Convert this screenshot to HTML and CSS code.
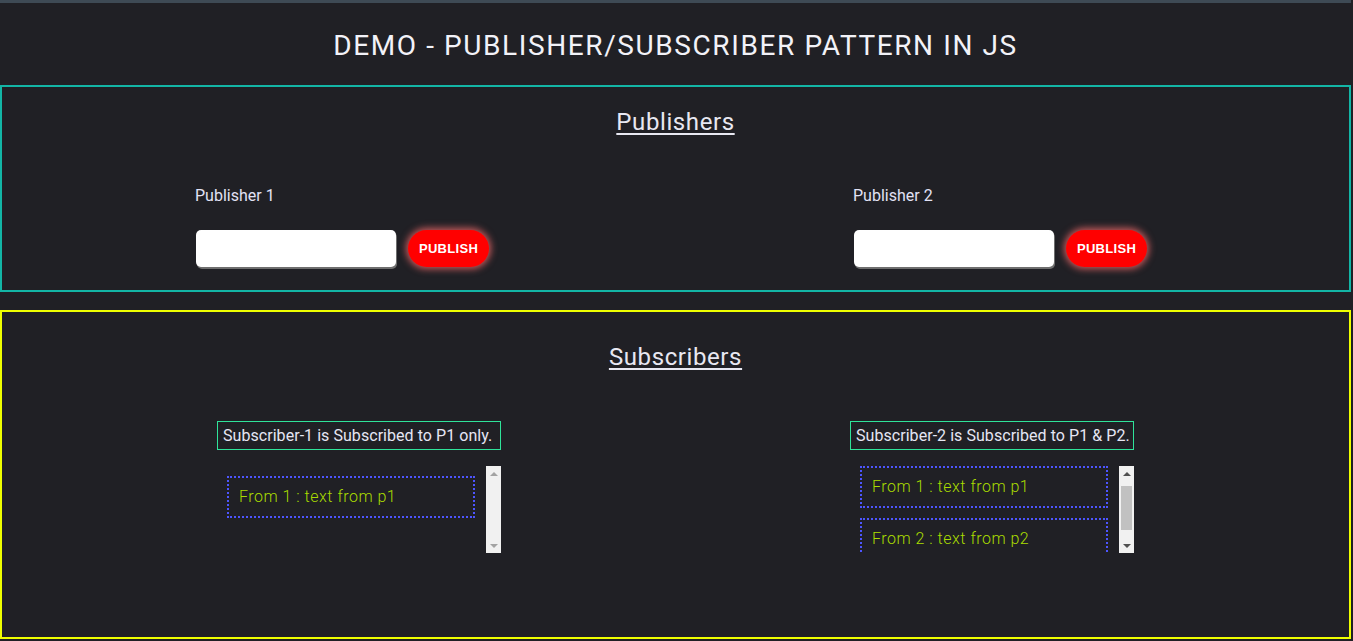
FILE: index.html
```
<!DOCTYPE html>
<html>
<head>
<meta charset="utf-8">
<title>Pub/Sub Demo</title>
<link rel="stylesheet" href="styles.css">
</head>
<body>
<header class="top">
  <h1 class="title">DEMO - PUBLISHER/SUBSCRIBER PATTERN IN JS</h1>
</header>
<section class="panel pubs">
  <h2 class="panel-title">Publishers</h2>
  <div class="pub-row">
    <div class="pub">
      <div class="pub-label">Publisher 1</div>
      <div class="pub-controls">
        <input class="pub-input" type="text">
        <button class="pub-btn">PUBLISH</button>
      </div>
    </div>
    <div class="pub">
      <div class="pub-label">Publisher 2</div>
      <div class="pub-controls">
        <input class="pub-input" type="text">
        <button class="pub-btn">PUBLISH</button>
      </div>
    </div>
  </div>
</section>
<section class="panel subs">
  <h2 class="panel-title">Subscribers</h2>
  <div class="sub-row">
    <div class="sub sub-1">
      <div class="sub-label">Subscriber-1 is Subscribed to P1 only.</div>
      <div class="sub-list idle">
        <div class="sub-view">
          <div class="msg">From 1 : text from p1</div>
        </div>
        <div class="scrollbar">
          <div class="sb-btn"><span class="arrow up"></span></div>
          <div class="sb-track"></div>
          <div class="sb-btn"><span class="arrow down"></span></div>
        </div>
      </div>
    </div>
    <div class="sub sub-2">
      <div class="sub-label">Subscriber-2 is Subscribed to P1 &amp; P2.</div>
      <div class="sub-list active">
        <div class="sub-view" id="view2">
          <div class="msg">From 1 : text from p1</div>
          <div class="msg">From 2 : text from p2</div>
        </div>
        <div class="scrollbar">
          <div class="sb-btn"><span class="arrow up"></span></div>
          <div class="sb-track"><div class="sb-thumb"></div></div>
          <div class="sb-btn"><span class="arrow down"></span></div>
        </div>
      </div>
    </div>
  </div>
</section>
<script src="script.js"></script>
</body>
</html>
```
FILE: styles.css
```
* { box-sizing: border-box; }
html, body { margin: 0; padding: 0; }
body {
  background: #202025;
  color: #e8e8f2;
  font-family: Roboto, "Liberation Sans", sans-serif;
  border-top: 3px solid #3e4a55;
  width: 1351px;
  height: 641px;
  overflow: hidden;
}
.top {
  height: 82px;
  padding-top: 2px;
  display: flex;
  align-items: center;
  justify-content: center;
}
.title {
  margin: 0;
  font-weight: 400;
  font-size: 28px;
  letter-spacing: 1.6px;
  color: #f2f2f8;
}
.panel {
  border: 2px solid #13b5a6;
  width: 1351px;
}
.pubs {
  height: 207px;
  padding-top: 21px;
}
.subs {
  border-color: #eeff00;
  margin-top: 18px;
  height: 329px;
  padding-top: 31px;
}
.panel-title {
  margin: 0;
  text-align: center;
  font-weight: 400;
  font-size: 24px;
  letter-spacing: 0.6px;
  line-height: 28px;
  text-decoration: underline;
  text-underline-offset: 3px;
  text-decoration-thickness: 2px;
}
.pub-row {
  display: grid;
  grid-template-columns: 658px auto;
  padding-left: 193px;
  margin-top: 50px;
}
.pub-label {
  font-size: 16px;
  line-height: 20px;
  color: #e2e2f5;
}
.pub-controls {
  display: flex;
  align-items: center;
  gap: 12px;
  margin-top: 24px;
}
.pub-input {
  width: 200px;
  height: 37px;
  border: none;
  border-radius: 5px;
  background: #fff;
  box-shadow: 1px 2px 0 #6e6e6e;
  margin-left: 1px;
  outline: none;
}
.pub-btn {
  width: 81px;
  height: 37px;
  border: none;
  border-radius: 19px;
  background: #ff0000;
  color: #fff;
  font-family: "Liberation Sans", Arial, sans-serif;
  font-weight: 700;
  font-size: 13px;
  letter-spacing: 0.3px;
  box-shadow: 0 0 7px 2px rgba(255, 110, 110, 0.75);
  padding: 0;
}
.sub-row {
  display: grid;
  grid-template-columns: 633px auto;
  padding-left: 215px;
  margin-top: 50px;
}
.sub {
  width: 284px;
}
.sub-label {
  border: 1px solid #2fe39a;
  height: 29px;
  font-size: 16px;
  letter-spacing: 0.05px;
  line-height: 27px;
  padding-left: 5px;
  white-space: nowrap;
  color: #e6e6f4;
}
.sub-list {
  margin-top: 16px;
  margin-left: 10px;
  width: 274px;
  height: 87px;
  display: flex;
}
.sub-view {
  flex: 1;
  overflow: hidden;
  padding-top: 10px;
}
.scrollbar {
  width: 15px;
  background: #f1f1f1;
  display: flex;
  flex-direction: column;
}
.sb-btn {
  height: 15px;
  display: flex;
  align-items: center;
  justify-content: center;
}
.arrow {
  width: 0;
  height: 0;
  border-left: 4px solid transparent;
  border-right: 4px solid transparent;
}
.idle .arrow.up { border-bottom: 4px solid #a3a3a3; }
.idle .arrow.down { border-top: 4px solid #a3a3a3; }
.active .arrow.up { border-bottom: 4px solid #505050; }
.active .arrow.down { border-top: 4px solid #505050; }
.sb-track {
  flex: 1;
  padding: 5px 2px 0;
}
.sb-thumb {
  height: 44px;
  background: #c1c1c1;
}
.msg {
  width: 248px;
  height: 42px;
  border: 2px dotted #4d55ff;
  color: #aadd00;
  font-size: 16px;
  font-weight: 300;
  letter-spacing: 0.5px;
  line-height: 38px;
  padding-left: 10px;
  margin-bottom: 10px;
  white-space: nowrap;
}
```
FILE: script.js
```
document.getElementById('view2').scrollTop = 10;
```
